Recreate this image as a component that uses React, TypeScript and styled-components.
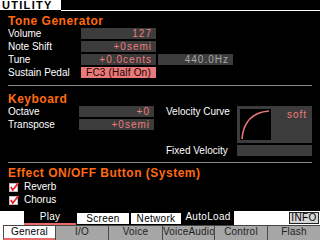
import React from 'react';
import styled, { createGlobalStyle } from "styled-components";

const GlobalStyle = createGlobalStyle`
  html, body {
    margin: 0;
    padding: 0;
    background: #000;
  }
  body {
    font-family: "Liberation Sans", Arial, sans-serif;
  }
`

const Screen = styled.div`
  width: 320px;
  height: 240px;
  background: #000;
  color: #fff;
  display: flex;
  flex-direction: column;
  overflow: hidden;
`

const TitleBar = styled.div`
  height: 11px;
  display: flex;
  align-items: flex-start;
`

const TitleTab = styled.div`
  width: 59px;
  height: 10px;
  padding-left: 2px;
  background: #fff;
  color: #000;
  font-weight: bold;
  font-size: 11px;
  line-height: 10px;
  letter-spacing: 1.3px;
`

const TitleRule = styled.div`
  flex: 1;
  height: 1px;
  margin-top: 10px;
  background: #fff;
`

const Body = styled.div`
  flex: 1;
  padding: 0 8px;
  display: flex;
  flex-direction: column;
`

const Section = styled.div<{ top: number }>`
  padding-top: ${(p) => p.top}px;
`

const Heading = styled.div`
  height: 14px;
  line-height: 14px;
  color: #ff6a10;
  font-weight: bold;
  font-size: 12px;
  letter-spacing: 0.5px;
`

const Divider = styled.div<{ gap: number }>`
  height: 1px;
  margin-top: ${(p) => p.gap}px;
  background: #8a8a8a;
`

const ParamGrid = styled.div`
  display: grid;
  grid-template-columns: 71px 75px 75px;
  grid-auto-rows: 11px;
  column-gap: 2px;
  row-gap: 2px;
`

const KeyGrid = styled.div`
  display: grid;
  grid-template-columns: 71px 75px 12px 71px 75px;
  grid-template-rows: repeat(4, 11px);
  row-gap: 2px;
`

const Label = styled.div<{ col?: number; row?: number }>`
  grid-column: ${(p) => p.col ?? 'auto'};
  grid-row: ${(p) => p.row ?? 'auto'};
  font-size: 10px;
  line-height: 11px;
  color: #fff;
  white-space: nowrap;
`

const Value = styled.div<{ tone?: 'pink' | 'gray' | 'hot'; col?: number; row?: number }>`
  grid-column: ${(p) => p.col ?? 'auto'};
  grid-row: ${(p) => p.row ?? 'auto'};
  background: ${(p) => (p.tone === 'hot' ? '#e97a7a' : '#3c3c3c')};
  color: ${(p) => (p.tone === 'hot' ? '#1a0000' : p.tone === 'gray' ? '#a8a8a8' : '#f07c7c')};
  text-align: ${(p) => (p.tone === 'hot' ? 'center' : 'right')};
  padding: 0 ${(p) => (p.tone === 'hot' ? 0 : 4)}px;
  font-size: 10px;
  line-height: 11px;
  letter-spacing: ${(p) => (p.tone === 'hot' ? 0.2 : 1)}px;
  white-space: nowrap;
`

const CurveBox = styled.div`
  grid-column: 5;
  grid-row: 1 / span 3;
  background: #3c3c3c;
  display: flex;
  align-items: flex-start;
  justify-content: space-between;
  padding: 3px 5px 3px 3px;
`

const CurveView = styled.div`
  width: 31px;
  height: 31px;
  background: #000;
`

const CurveName = styled.div`
  color: #f07c7c;
  font-size: 10px;
  line-height: 11px;
  letter-spacing: 1px;
`

const CheckList = styled.div`
  margin-top: 1px;
  display: grid;
  grid-auto-rows: 11px;
  row-gap: 2px;
`

const CheckRow = styled.div`
  display: flex;
  align-items: center;
  gap: 4px;
  padding-left: 1px;
  font-size: 10px;
  line-height: 11px;
`

const TabRow = styled.div<{ h: number }>`
  height: ${(p) => p.h}px;
  display: flex;
  background: #fff;
`

const TopTab = styled.div<{ w: number; kind: 'active' | 'plain' | 'dark' }>`
  width: ${(p) => p.w}px;
  box-sizing: border-box;
  background: ${(p) => (p.kind === 'plain' ? '#fff' : '#000')};
  color: ${(p) => (p.kind === 'plain' ? '#000' : '#fff')};
  border: ${(p) => (p.kind === 'plain' ? '1px solid #000' : 'none')};
  border-top-width: ${(p) => (p.kind === 'plain' ? 2 : 0)}px;
  border-bottom: ${(p) => (p.kind === 'active' ? '2px solid #e86a6a' : p.kind === 'plain' ? '1px solid #000' : 'none')};
  font-size: 10px;
  line-height: ${(p) => (p.kind === 'plain' ? 11 : 12)}px;
  text-align: center;
  letter-spacing: 0.3px;
`

const TopFill = styled.div<{ w?: number }>`
  width: ${(p) => (p.w ? `${p.w}px` : 'auto')};
  flex: ${(p) => (p.w ? 'none' : 1)};
  display: flex;
  justify-content: flex-end;
  align-items: center;
  background: #fff;
`

const InfoButton = styled.div`
  width: 30px;
  height: 12px;
  box-sizing: border-box;
  margin-right: 1px;
  background: #d4d4d4;
  border: 1px solid #222;
  color: #000;
  font-size: 10px;
  line-height: 10px;
  text-align: center;
  letter-spacing: 0.4px;
`

const BottomTab = styled.div<{ w: number; active?: boolean }>`
  width: ${(p) => p.w}px;
  box-sizing: border-box;
  background: ${(p) => (p.active ? '#fff' : '#a6a6a6')};
  color: ${(p) => (p.active ? '#000' : '#1e1e1e')};
  border-top: 1px solid #444;
  border-left: 1px solid #4a4a4a;
  border-bottom: ${(p) => (p.active ? '2px solid #e86a6a' : 'none')};
  font-size: 10px;
  line-height: 12px;
  text-align: center;
  letter-spacing: 0.2px;
  white-space: nowrap;
`

const CheckIcon = () => (
  <svg width="11" height="10" viewBox="0 0 11 10">
    <rect x="0.5" y="1.5" width="8" height="8" fill="#fff" stroke="#bbb" />
    <path d="M1.8 5 L3.8 8 L9.5 0.8" stroke="#e8202a" strokeWidth="1.8" fill="none" />
  </svg>
)

const Curve = () => (
  <svg width="31" height="31" viewBox="0 0 31 31">
    <path d="M2 30 Q 4 4 29 2" stroke="#e87878" strokeWidth="1.6" fill="none" />
  </svg>
)

const tone = [
  { label: 'Volume', value: '127' },
  { label: 'Note Shift', value: '+0semi' },
]

const bottomTabs = [
  { name: 'I/O', w: 53 },
  { name: 'Voice', w: 54 },
  { name: 'VoiceAudio', w: 52 },
  { name: 'Control', w: 53 },
  { name: 'Flash', w: 53 },
]

export default function App() {
  return (
    <Screen>
      <GlobalStyle />
      <TitleBar>
        <TitleTab>UTILITY</TitleTab>
        <TitleRule />
      </TitleBar>
      <Body>
        <Section top={3}>
          <Heading>Tone Generator</Heading>
          <ParamGrid>
            {tone.map((t) => (
              <React.Fragment key={t.label}>
                <Label>{t.label}</Label>
                <Value>{t.value}</Value>
                <div />
              </React.Fragment>
            ))}
            <Label>Tune</Label>
            <Value>+0.0cents</Value>
            <Value tone="gray">440.0Hz</Value>
            <Label>Sustain Pedal</Label>
            <Value tone="hot">FC3 (Half On)</Value>
            <div />
          </ParamGrid>
        </Section>
        <Divider gap={7} />
        <Section top={6}>
          <Heading>Keyboard</Heading>
          <KeyGrid>
            <Label col={1} row={1}>Octave</Label>
            <Value col={2} row={1}>+0</Value>
            <Label col={1} row={2}>Transpose</Label>
            <Value col={2} row={2}>+0semi</Value>
            <Label col={4} row={1}>Velocity Curve</Label>
            <CurveBox>
              <CurveView><Curve /></CurveView>
              <CurveName>soft</CurveName>
            </CurveBox>
            <Label col={4} row={4}>Fixed Velocity</Label>
            <Value col={5} row={4}></Value>
          </KeyGrid>
        </Section>
        <Divider gap={6} />
        <Section top={3}>
          <Heading>Effect ON/OFF Button (System)</Heading>
          <CheckList>
            <CheckRow><CheckIcon />Reverb</CheckRow>
            <CheckRow><CheckIcon />Chorus</CheckRow>
          </CheckList>
        </Section>
      </Body>
      <TabRow h={14}>
        <TopFill w={24} />
        <TopTab w={52} kind="active">Play</TopTab>
        <TopTab w={54} kind="plain">Screen</TopTab>
        <TopTab w={52} kind="plain">Network</TopTab>
        <TopTab w={52} kind="dark">AutoLoad</TopTab>
        <TopFill><InfoButton>INFO</InfoButton></TopFill>
      </TabRow>
      <TabRow h={15}>
        <TopFill w={3} />
        <BottomTab w={52} active>General</BottomTab>
        {bottomTabs.map((t) => (
          <BottomTab key={t.name} w={t.w}>{t.name}</BottomTab>
        ))}
      </TabRow>
    </Screen>
  );
}
